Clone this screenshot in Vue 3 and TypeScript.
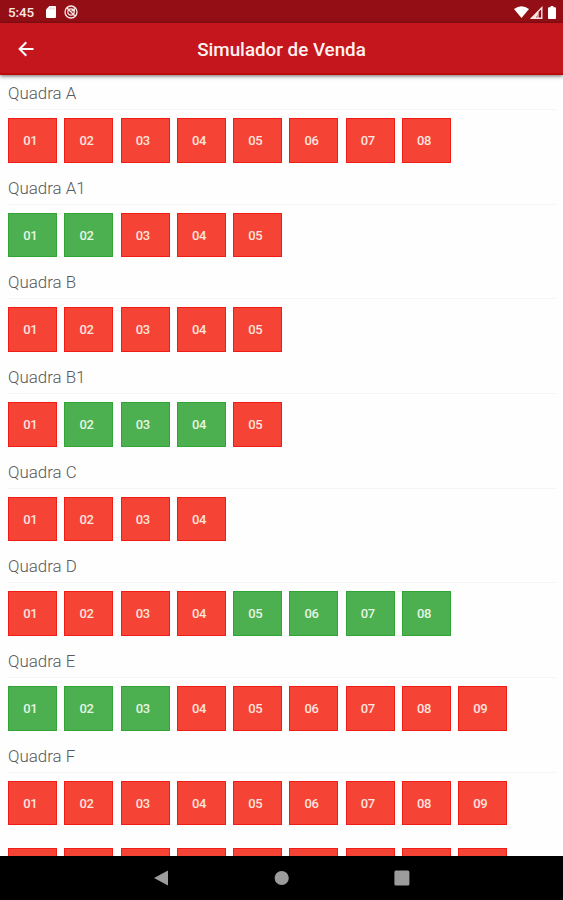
<script setup lang="ts">
interface Block {
  name: string
  lots: number
  available: number[]
}

const blocks: Block[] = [
  { name: 'Quadra A', lots: 8, available: [] },
  { name: 'Quadra A1', lots: 5, available: [1, 2] },
  { name: 'Quadra B', lots: 5, available: [] },
  { name: 'Quadra B1', lots: 5, available: [2, 3, 4] },
  { name: 'Quadra C', lots: 4, available: [] },
  { name: 'Quadra D', lots: 8, available: [5, 6, 7, 8] },
  { name: 'Quadra E', lots: 9, available: [1, 2, 3] },
  { name: 'Quadra F', lots: 9, available: [] },
]

const label = (n: number): string => String(n).padStart(2, '0')
</script>

<template>
  <div class="screen">
    <div class="status">
      <span class="clock">5:45</span>
      <svg class="sd" viewBox="0 0 10 12"><path d="M3.4 0H9a1 1 0 0 1 1 1v10a1 1 0 0 1-1 1H1a1 1 0 0 1-1-1V3.4z" fill="#fff" /><path d="M4 1.500v2M6 1.500v2M8 1.500v2" stroke="#d9a8a8" stroke-width=".8" /></svg>
      <svg class="sync" viewBox="0 0 14 14" fill="none" stroke="#fbe9e8"><circle cx="7" cy="7" r="6" stroke-width="1.300" /><circle cx="7" cy="7" r="3.200" stroke-width="1.200" /><path d="M3 3l8 8M7.500 5.500h2.800V3.200" stroke-width="1.300" /></svg>
      <span class="spacer"></span>
      <svg class="wifi" viewBox="0 0 15 12"><path d="M0 3Q7.500-2.500 15 3L7.500 12z" fill="#fff" /></svg>
      <svg class="signal" viewBox="0 0 13 13"><path d="M1.500 12.200L11.800 1.700V12.200z" fill="none" stroke="#f8e4e3" stroke-width="1.400" /><path d="M1 12.700L8 5.500V8L5.500 12.700z" fill="#f8e4e3" /><path d="M8 5.500V12" stroke="#f8e4e3" stroke-width="1.200" /></svg>
      <svg class="battery" viewBox="0 0 8 13"><path d="M2.500 0h3v1.300H7a1 1 0 0 1 1 1V12a1 1 0 0 1-1 1H1a1 1 0 0 1-1-1V2.300a1 1 0 0 1 1-1h1.500z" fill="#fff" /></svg>
    </div>
    <header class="appbar">
      <svg class="back" viewBox="0 0 16 16" fill="none" stroke="#fff" stroke-width="2"><path d="M15.500 8H1.800M8.300 1.300L1.600 8L8.300 14.700" /></svg>
      <h1>Simulador de Venda</h1>
    </header>
    <main class="list">
      <section v-for="block in blocks" :key="block.name" class="block">
        <h2>{{ block.name }}</h2>
        <div class="lots">
          <div v-for="n in block.lots" :key="n" class="lot" :class="{ free: block.available.includes(n) }">{{ label(n) }}</div>
        </div>
      </section>
      <div class="lots next">
        <div v-for="n in 9" :key="n" class="lot"></div>
      </div>
    </main>
    <nav class="nav">
      <svg viewBox="0 0 16 16"><path d="M0 8L14 .400v15.200z" fill="#9c9c9c" /></svg>
      <svg viewBox="0 0 16 16"><circle cx="7.700" cy="8" r="7.100" fill="#9c9c9c" /></svg>
      <svg viewBox="0 0 16 16"><rect x=".4" y=".5" width="15" height="15" rx="1.500" fill="#9c9c9c" /></svg>
    </nav>
  </div>
</template>

<style>
body {
  overflow: hidden;
}
</style>

<style scoped>
.screen {
  display: flex;
  flex-direction: column;
  width: 563px;
  height: 900px;
  overflow: hidden;
  background: #fefefe;
  font-family: Roboto, "Liberation Sans", sans-serif;
}
.status {
  flex: none;
  display: flex;
  align-items: center;
  box-sizing: border-box;
  height: 23px;
  padding: 1px 7px 0 8px;
  background: #930f15;
  color: #fbe9e8;
}
.clock {
  width: 37px;
  font-size: 13.4px;
  font-weight: 500;
  letter-spacing: -0.1px;
}
.sd {
  width: 10px;
  height: 12px;
  margin: 0 0 0 1px;
}
.sync {
  width: 14px;
  height: 14px;
  margin-left: 8px;
}
.spacer {
  flex: 1;
}
.wifi {
  width: 15px;
  height: 12px;
}
.signal {
  width: 13px;
  height: 13px;
  margin: 0 5px 0 1px;
}
.battery {
  width: 8px;
  height: 13px;
}
.appbar {
  flex: none;
  position: relative;
  z-index: 1;
  display: grid;
  grid-template-columns: 1fr auto 1fr;
  align-items: center;
  box-sizing: border-box;
  height: 52px;
  border-bottom: 2px solid #bf080b;
  background: #c5161d;
  color: #fff2f0;
  box-shadow: 0 1px 4px rgba(0, 0, 0, 0.6);
}
.back {
  width: 16px;
  height: 16px;
  margin: 2px 0 0 18px;
}
h1 {
  margin: 3px 0 0;
  font-size: 18.8px;
  font-weight: 500;
  line-height: 24px;
}
.list {
  flex: 1;
  min-height: 0;
  overflow: hidden;
  padding: 0 7px 0 8px;
}
.block {
  height: 94.69px;
}
h2 {
  box-sizing: border-box;
  height: 35px;
  margin: 0 0 8px;
  border-bottom: 1px solid #f4f5f5;
  color: #585858;
  font-size: 16.9px;
  font-weight: 300;
  line-height: 37px;
}
.lots {
  display: flex;
  gap: 7.25px;
}
.lot {
  box-sizing: border-box;
  width: 49px;
  height: 44.5px;
  padding-right: 4.5px;
  border: 1px solid #f01c15;
  background: #f54336;
  color: #ffe3de;
  font-size: 13px;
  font-weight: 500;
  letter-spacing: -0.4px;
  line-height: 43px;
  text-align: center;
}
.lot.free {
  border-color: #30a536;
  background: #4caf50;
  color: #e6f6e4;
}
.next {
  padding-top: 15.5px;
}
.nav {
  flex: none;
  display: flex;
  justify-content: center;
  align-items: center;
  gap: 104px;
  height: 44px;
  background: #000;
}
.nav svg {
  width: 16px;
  height: 16px;
}
</style>
